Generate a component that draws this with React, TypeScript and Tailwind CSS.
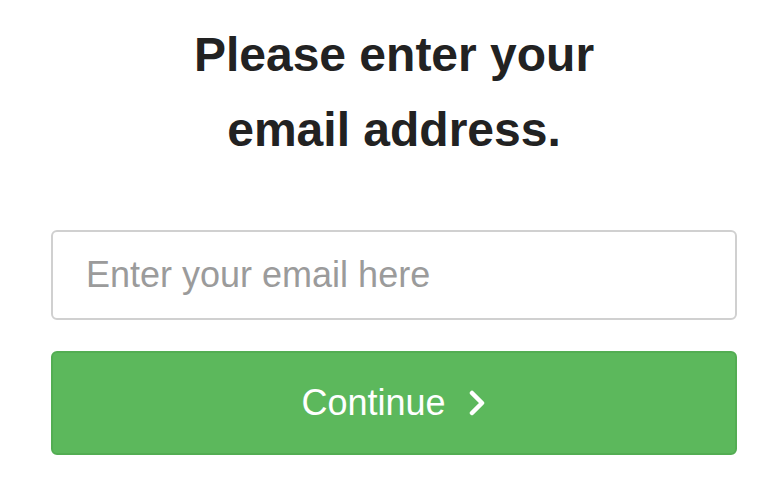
export default function App() {
  return (
    <div className="min-h-[504px] bg-white font-['Liberation_Sans',Arial,sans-serif]">
      <div className="ml-[51px] w-[686px] pt-[17px]">
        <h1 className="text-center text-[48px] font-bold leading-[75px] text-[#222]">
          Please enter your
          <br />
          email address.
        </h1>
        <input
          type="email"
          placeholder="Enter your email here"
          className="mt-[63px] block h-[90px] w-full rounded-[6px] border-2 border-[#d0d0d0] bg-white px-[33px] text-[36px] text-[#333] placeholder:text-[#9b9b9b] outline-none"
        />
        <button className="mt-[31px] flex h-[104px] w-full items-center justify-center gap-[21px] rounded-[6px] border-2 border-[#53ad53] bg-[#5cb85c] text-[36px] text-white">
          <span>Continue</span>
          <svg width="20" height="26" viewBox="0 0 20 26" fill="none">
            <polyline
              points="5,3 15,13 5,23"
              stroke="white"
              strokeWidth="4.5"
              strokeLinecap="round"
              strokeLinejoin="round"
            />
          </svg>
        </button>
      </div>
    </div>
  );
}
